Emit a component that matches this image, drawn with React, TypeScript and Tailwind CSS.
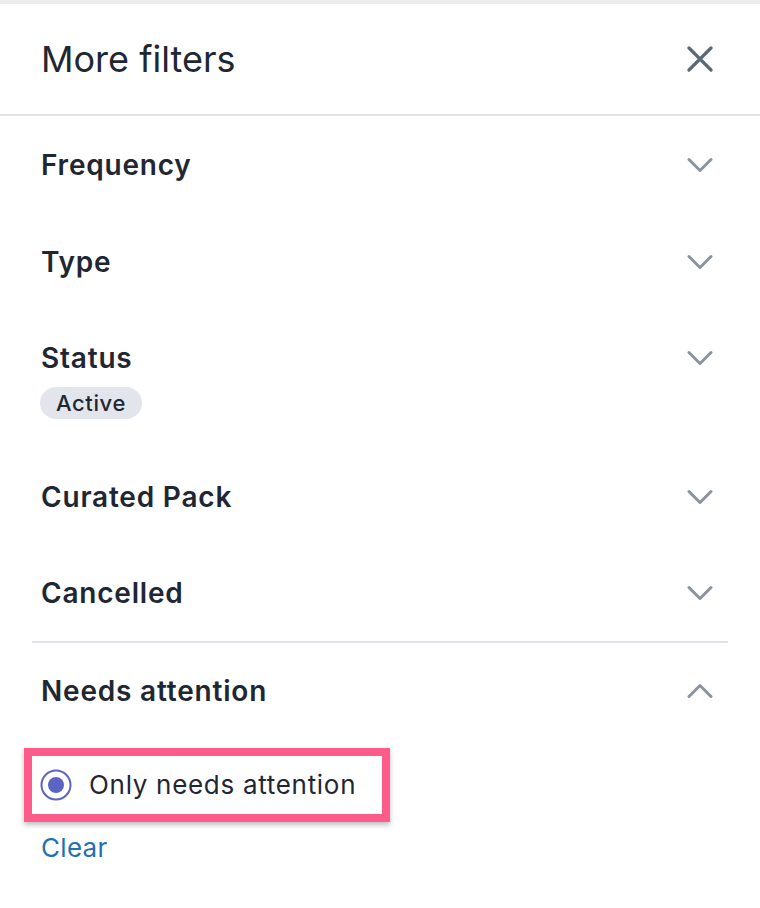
import React from 'react';

const Chevron = ({ up = false }: { up?: boolean }) => (
  <svg width="26" height="16" viewBox="0 0 26 16" fill="none" className="shrink-0">
    <path
      d={up ? 'M2 13.5 L13 2.5 L24 13.5' : 'M2 2.5 L13 13.5 L24 2.5'}
      stroke="#8a939e"
      strokeWidth="3"
      strokeLinecap="round"
      strokeLinejoin="round"
    />
  </svg>
);

const RowHead = ({ title, up = false }: { title: string; up?: boolean }) => (
  <div className="flex items-center justify-between h-[32px] pr-[6px]">
    <span className="text-[28px] font-semibold text-[#1f2733] leading-none tracking-[0.8px]">{title}</span>
    <Chevron up={up} />
  </div>
);

const FilterRow = ({ title, h = 'h-[97px]' }: { title: string; h?: string }) => (
  <div className={`${h} px-[41px] flex flex-col justify-center`}>
    <RowHead title={title} />
  </div>
);

export default function App() {
  return (
    <div className="w-[760px] h-[908px] bg-white overflow-hidden" style={{ fontFamily: 'Inter, "Noto Sans", sans-serif' }}>
      <div className="h-[4px] bg-[#ececec]" />

      {/* header */}
      <div className="h-[112px] flex items-center justify-between pl-[41px] pr-[47px] border-b-2 border-[#e3e3e3]">
        <h1 className="text-[36px] font-normal text-[#1f2733] leading-none">More filters</h1>
        <svg width="26" height="26" viewBox="0 0 26 26" fill="none">
          <path d="M2 2 L24 24 M24 2 L2 24" stroke="#5d6975" strokeWidth="3.2" strokeLinecap="round" />
        </svg>
      </div>

      <FilterRow title="Frequency" />
      <FilterRow title="Type" />
      <div className="h-[138px] px-[41px] pt-[32px]">
        <RowHead title="Status" />
        <div className="mt-[13px] inline-flex items-center h-[32px] px-[16px] rounded-full bg-[#e3e5ec] -ml-[1px]">
          <span className="text-[22px] font-medium text-[#1f2733] leading-none tracking-[0.6px]">Active</span>
        </div>
      </div>
      <FilterRow title="Curated Pack" />
      <FilterRow title="Cancelled" h="h-[96px]" />

      <div className="mx-[32px] h-[2px] bg-[#e1e2e8]" />

      <div className="h-[96px] px-[41px] flex flex-col justify-center">
        <RowHead title="Needs attention" up />
      </div>

      <div className="pl-[24px] mt-[9px]">
        <div className="inline-flex items-center w-[366px] h-[74px] border-[8px] border-[#fd5c8b] shadow-[0_3px_5px_rgba(0,0,0,0.25)] pl-[8px]">
          <svg width="32" height="32" viewBox="0 0 32 32" className="shrink-0">
            <circle cx="16" cy="16" r="14.5" fill="none" stroke="#5b63c4" strokeWidth="2" />
            <circle cx="16" cy="16" r="8" fill="#5b63c4" />
          </svg>
          <span className="ml-[17px] text-[26px] text-[#1f2733] leading-none tracking-[0.7px]">Only needs attention</span>
        </div>
      </div>

      <div className="px-[41px] mt-[13px]">
        <span className="text-[26px] text-[#2370b0] leading-none tracking-[0.3px]">Clear</span>
      </div>
    </div>
  );
}
